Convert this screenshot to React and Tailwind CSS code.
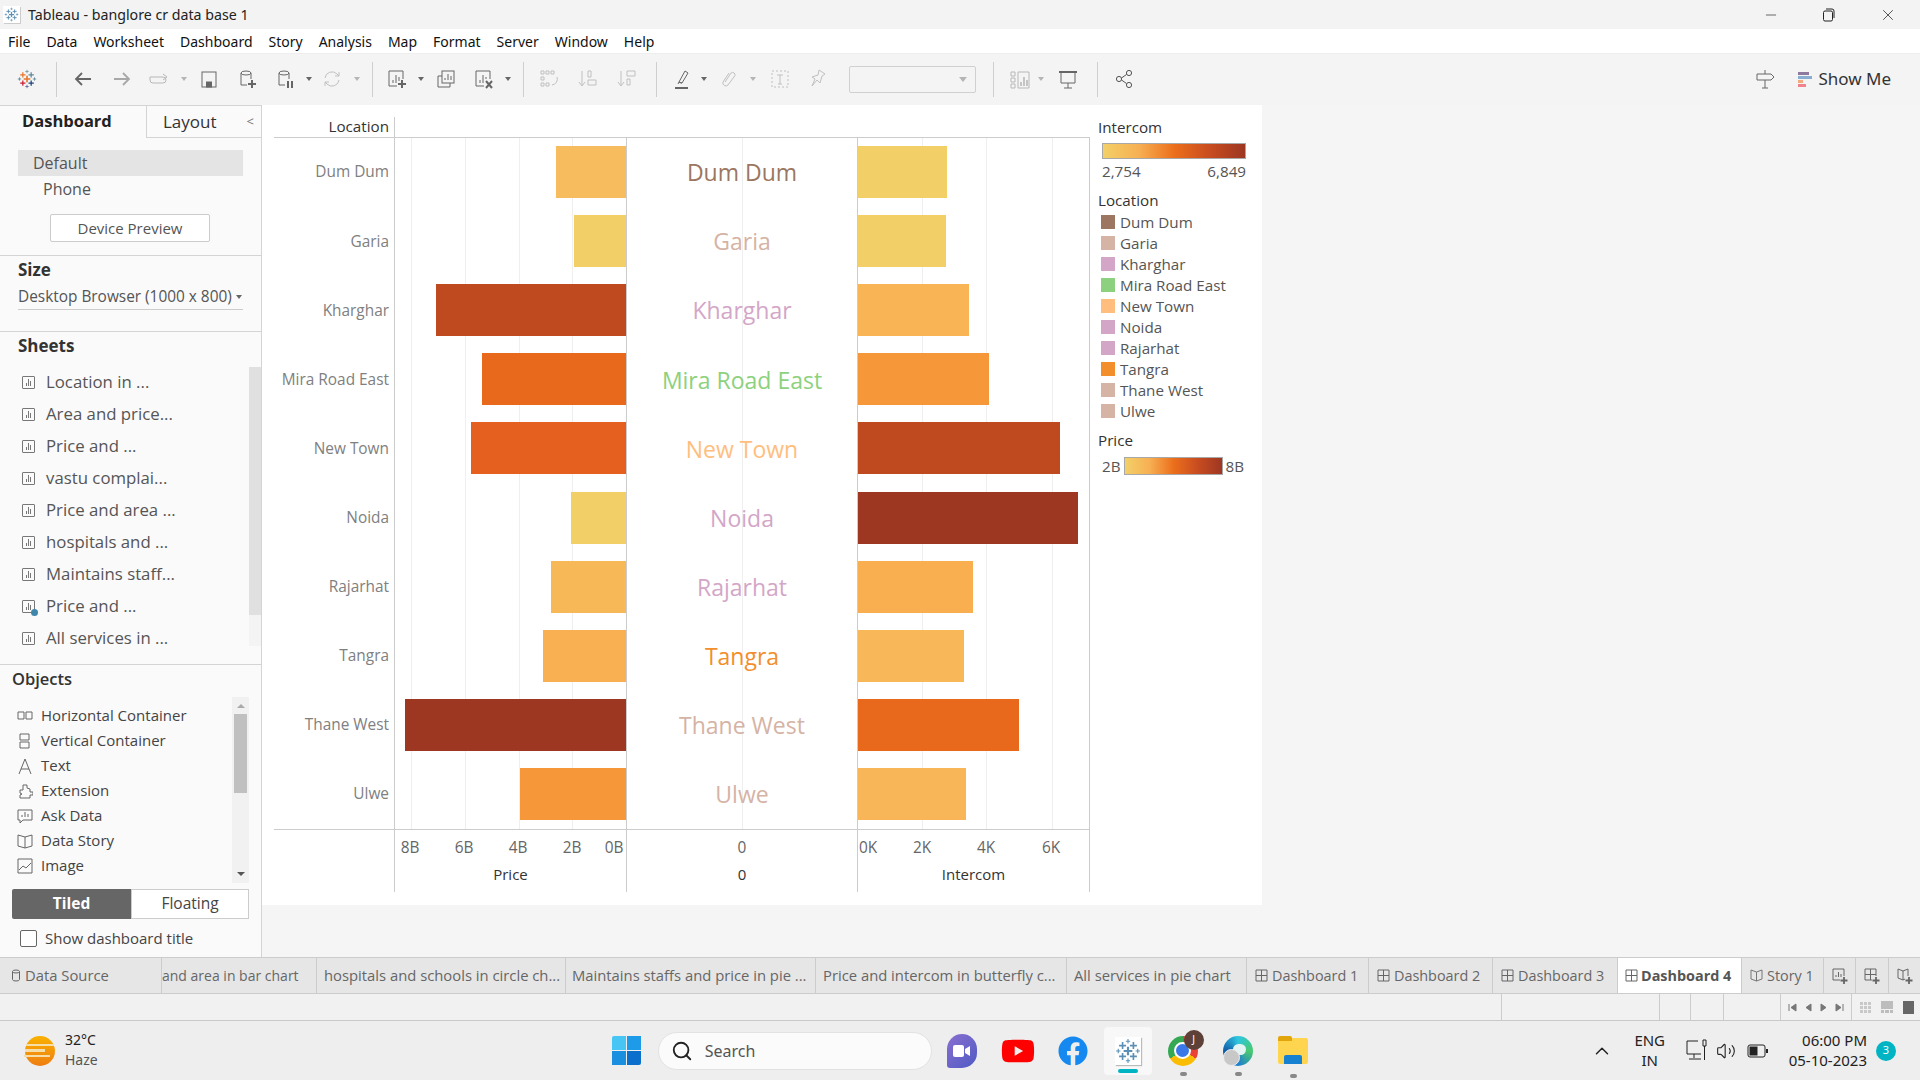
import React from "react";
import { Search, ChevronUp, Minus, X, Volume2 } from "lucide-react";
import { FaFacebook, FaYoutube } from "react-icons/fa";

const TAB_FONT = "font-['Open_Sans',sans-serif]";

const rows = [
  { name: "Dum Dum", text: "text-[#9c7660]", left: 70, lc: "bg-[#f7bc5e]", right: 89, rc: "bg-[#f3d067]" },
  { name: "Garia", text: "text-[#d5b3a5]", left: 52, lc: "bg-[#f3cf68]", right: 88, rc: "bg-[#f3cf68]" },
  { name: "Kharghar", text: "text-[#d3a6c8]", left: 190, lc: "bg-[#c04a20]", right: 111, rc: "bg-[#f9b456]" },
  { name: "Mira Road East", text: "text-[#8cd17d]", left: 144, lc: "bg-[#e8681c]", right: 131, rc: "bg-[#f69739]" },
  { name: "New Town", text: "text-[#ffbe7d]", left: 155, lc: "bg-[#e5601e]", right: 202, rc: "bg-[#c04a20]" },
  { name: "Noida", text: "text-[#d3a6c8]", left: 55, lc: "bg-[#f3d067]", right: 220, rc: "bg-[#9d3722]" },
  { name: "Rajarhat", text: "text-[#d3a6c8]", left: 75, lc: "bg-[#f7b858]", right: 115, rc: "bg-[#f9ae50]" },
  { name: "Tangra", text: "text-[#f28e2b]", left: 83, lc: "bg-[#f8b053]", right: 106, rc: "bg-[#f8b85a]" },
  { name: "Thane West", text: "text-[#d5b3a5]", left: 221, lc: "bg-[#9d3722]", right: 161, rc: "bg-[#e8681c]" },
  { name: "Ulwe", text: "text-[#d5b3a5]", left: 106, lc: "bg-[#f69739]", right: 108, rc: "bg-[#f8b658]" },
];

const legend = [
  ["Dum Dum", "bg-[#9c7660]"],
  ["Garia", "bg-[#d5b3a5]"],
  ["Kharghar", "bg-[#d3a6c8]"],
  ["Mira Road East", "bg-[#8cd17d]"],
  ["New Town", "bg-[#ffbe7d]"],
  ["Noida", "bg-[#d3a6c8]"],
  ["Rajarhat", "bg-[#d3a6c8]"],
  ["Tangra", "bg-[#f28e2b]"],
  ["Thane West", "bg-[#d5b3a5]"],
  ["Ulwe", "bg-[#d5b3a5]"],
];

const sheets = ["Location in ...", "Area and price...", "Price and ...", "vastu complai...", "Price and area ...", "hospitals and ...", "Maintains staff...", "Price and ...", "All services in ..."];

function Cross({ x, y, s, c, w = 1.2 }) {
  return <path d={`M${x - s} ${y}H${x + s}M${x} ${y - s}V${y + s}`} stroke={c} strokeWidth={w} fill="none" />;
}

function TableauLogo({ size = 20, mono = false }) {
  const c = (v) => (mono ? "#5b8fb5" : v);
  return (
    <svg width={size} height={size} viewBox="0 0 24 24" className="shrink-0">
      <Cross x={12} y={12} s={4} c={c("#e8762c")} w={2} />
      <Cross x={7} y={7} s={3.2} c={c("#e8762c")} w={1.5} />
      <Cross x={17} y={7} s={3.2} c={c("#5b879b")} w={1.5} />
      <Cross x={7} y={17} s={3.2} c={c("#c72037")} w={1.5} />
      <Cross x={17} y={17} s={3.2} c={c("#1f457e")} w={1.5} />
      <Cross x={12} y={3} s={2} c={c("#7199a6")} w={1} />
      <Cross x={12} y={21} s={2} c={c("#5b6591")} w={1} />
      <Cross x={3} y={12} s={2} c={c("#59879b")} w={1} />
      <Cross x={21} y={12} s={2} c={c("#59879b")} w={1} />
    </svg>
  );
}

function Ico({ children, className = "", w = 20, h = 20, box = "0 0 20 20" }) {
  return (
    <svg width={w} height={h} viewBox={box} fill="none" stroke="currentColor" strokeWidth="1" className={`shrink-0 ${className}`}>
      {children}
    </svg>
  );
}

const Caret = ({ className = "", light = false }) => (
  <div className={`shrink-0 w-0 h-0 border-l-[3px] border-r-[3px] border-t-[4px] border-l-transparent border-r-transparent ${light ? "border-t-[#b5b5b5]" : "border-t-[#666666]"} ${className}`} />
);

const TbDiv = ({ className = "" }) => <div className={`shrink-0 w-px h-[35px] bg-[#cfcfcf] ${className}`} />;

function Toolbar() {
  return (
    <div className="h-[51px] bg-[#f4f4f4] flex items-center shrink-0 pb-[1px]">
      <div className="ml-[17px]"><TableauLogo /></div>
      <TbDiv className="ml-[19px]" />
      <Ico className="ml-[16px] text-[#666666]"><path d="M18 10H3M9 4l-6 6 6 6" strokeWidth="1.8" /></Ico>
      <Ico className="ml-[19px] text-[#a8a8a8]"><path d="M2 10h15M11 4l6 6-6 6" strokeWidth="1.8" /></Ico>
      <Ico className="ml-[17px] text-[#b8b8b8]"><path d="M1 8h13a3 3 0 0 1 0 6H4a3 3 0 0 1-3-3V8M14 5l4 3-4 3" /></Ico>
      <Caret light className="ml-[12px]" />
      <Ico className="ml-[12px] text-[#666666]"><rect x="3" y="3" width="14" height="15" /><rect x="7.500" y="13" width="5" height="5" fill="currentColor" /></Ico>
      <Ico className="ml-[19px] text-[#666666]"><ellipse cx="8" cy="4" rx="5" ry="2" /><path d="M3 4v12h6M13 4v6" /><path d="M14 11v8M10 15h8" strokeWidth="2" /></Ico>
      <Ico className="ml-[18px] text-[#666666]"><ellipse cx="8" cy="4" rx="5" ry="2" /><path d="M3 4v12h6M13 4v6" /><path d="M12 12v7M16 12v7" strokeWidth="2" /></Ico>
      <Caret className="ml-[10px]" />
      <Ico className="ml-[10px] text-[#c0c0c0]"><path d="M3 9a7 7 0 0 1 12-4l2 2M17 11a7 7 0 0 1-12 4l-2-2" /><path d="M17 3v4h-4M3 17v-4h4" /></Ico>
      <Caret light className="ml-[12px]" />
      <TbDiv className="ml-[12px]" />
      <Ico className="ml-[14px] text-[#666666]"><path d="M10 17H2V2h14v8" /><path d="M6 14v-3M9 14V6M12 12V8" /><path d="M15 11v8M11 15h8" strokeWidth="2" /></Ico>
      <Caret className="ml-[11px]" />
      <Ico className="ml-[12px] text-[#666666]"><rect x="6" y="2" width="12" height="12" /><path d="M9 11V9M12 11V5M15 11V7" /><path d="M6 7H2v11h12v-4" /></Ico>
      <Ico className="ml-[18px] text-[#666666]"><path d="M10 17H2V2h14v8" /><path d="M6 14v-3M9 14V6M12 10V8" /><path d="M12 12l6 7M18 12l-6 7" strokeWidth="2" /></Ico>
      <Caret className="ml-[11px]" />
      <TbDiv className="ml-[12px]" />
      <Ico className="ml-[15px] text-[#c0c0c0]"><path d="M2 2h3v3H2zM7 2h3v3H7zM12 2h3v3h-3zM2 8h3v3H2zM2 14h3v3H2zM7 14h3v3H7z" /><path d="M18 8a6 6 0 0 1-5 8" /></Ico>
      <Ico className="ml-[19px] text-[#c0c0c0]"><path d="M4 2v14M1 13l3 4 3-4M10 2h3v6h-3zM10 11h8v5h-8z" /></Ico>
      <Ico className="ml-[19px] text-[#c0c0c0]"><path d="M4 2v14M1 13l3 4 3-4M10 2h8v5h-8zM10 10h3v6h-3z" /></Ico>
      <TbDiv className="ml-[19px]" />
      <Ico className="ml-[16px] text-[#666666]"><path d="M8 14l-2-1 6-11 3 2-6 10zM5 15l1-2 3 1" /><path d="M2 19h13" strokeWidth="2" /></Ico>
      <Caret className="ml-[8px]" />
      <Ico className="ml-[12px] text-[#c0c0c0]"><path d="M6 13l6-9a2.5 2.5 0 0 1 4 2.500L9 16a3 3 0 0 1-5-3l6-9" /></Ico>
      <Caret light className="ml-[11px]" />
      <Ico className="ml-[14px] text-[#c0c0c0]"><rect x="2" y="2" width="16" height="16" strokeDasharray="2 2" /><path d="M7 6h6M10 6v9M8 15h4" /></Ico>
      <Ico className="ml-[17px] text-[#c0c0c0]"><path d="M12 1l6 4-3 2-2 7-3-3-5 6 3-7-3-2 6-2z" /></Ico>
      <div className="ml-[22px] w-[127px] h-[27px] shrink-0 border border-[#d0d0d0] rounded-[2px] flex items-center justify-end pr-2">
        <Caret light className="border-l-[4px] border-r-[4px] border-t-[5px]" />
      </div>
      <TbDiv className="ml-[17px]" />
      <Ico className="ml-[16px] text-[#b8b8b8]"><path d="M8 3h11v16H8zM1 3h4v4H1zM1 9h4v4H1zM1 15h4v4H1z" /><path d="M11 17v-4M14 17V8M17 17v-6" strokeWidth="1.6" /></Ico>
      <Caret light className="ml-[8px]" />
      <Ico className="ml-[14px] text-[#666666]"><path d="M1 3h18" strokeWidth="2" /><path d="M3 3v11h14V3M10 14v5M6 19h8" /></Ico>
      <TbDiv className="ml-[19px]" />
      <Ico className="ml-[16px] text-[#555555]"><circle cx="15" cy="4" r="2.600" /><circle cx="5" cy="10" r="2.600" /><circle cx="15" cy="16" r="2.600" /><path d="M7.500 9l5-3.500M7.500 11l5 3.500" /></Ico>
      <Ico className="ml-auto text-[#666666]"><path d="M2 5h14l3 3-3 3H2zM10 1v4M10 11v8M7 19h6" /></Ico>
      <div className="ml-[23px] w-[14px] flex flex-col gap-[1px] shrink-0">
        <div className="h-[3px] w-[11px] bg-[#8e7a9e]" />
        <div className="h-[3px] w-[14px] bg-[#8aaed1]" />
        <div className="h-[3px] w-[5px] bg-[#f1aa7c]" />
        <div className="h-[3px] w-[8px] bg-[#f2828c]" />
      </div>
      <span className="ml-[6px] mr-[29px] text-[17px] text-[#333333] font-['Noto_Sans',sans-serif]">Show Me</span>
    </div>
  );
}

function SheetIcon({ check = false }) {
  return (
    <div className="relative w-[13px] h-[13px] border border-[#777777] rounded-[1px] flex items-end justify-center gap-[1px] pb-[2px] shrink-0">
      <i className="block w-px h-[3px] bg-[#777777]" />
      <i className="block w-px h-[7px] bg-[#777777]" />
      <i className="block w-px h-[5px] bg-[#777777]" />
      {check && <span className="absolute -right-[4px] -bottom-[4px] w-[7px] h-[7px] rounded-full bg-[#3f86ab]" />}
    </div>
  );
}

function ObjIcon({ kind }) {
  return (
    <Ico w={16} h={16} box="0 0 16 16" className="text-[#666666]">
      {kind === 0 && <path d="M1 4h6v7H1zM9 4h6v7H9z" />}
      {kind === 1 && <path d="M3 1h9v6H3zM3 9h9v6H3z" />}
      {kind === 2 && <path d="M2 16L8 1l6 15M4 11h8" />}
      {kind === 3 && <path d="M6 2h4v3l3 1v3h3v3h-3v3H3v-3l2-1-2-1V7h3z" />}
      {kind === 4 && <path d="M1 2h14v10H6l-3 3v-3H1zM5 9V7M8 9V4M11 9V6" />}
      {kind === 5 && <path d="M1 2l7 2 7-2v11l-7 2-7-2zM8 4v11" />}
      {kind === 6 && <path d="M1 1h14v14H1zM2 12l4-4 3 2 5-5" />}
    </Ico>
  );
}

function Sidebar() {
  const objects = ["Horizontal Container", "Vertical Container", "Text", "Extension", "Ask Data", "Data Story", "Image"];
  return (
    <div className="w-[262px] shrink-0 bg-[#fafafa] border-r border-t border-[#d4d4d4] flex flex-col font-['Open_Sans',sans-serif] text-[#555555]">
      <div className="h-[32px] flex shrink-0">
        <div className="w-[146px] pl-[22px] text-[16.500px] font-bold text-[#222222] leading-[30px]">Dashboard</div>
        <div className="flex-1 border-l border-b border-[#d4d4d4] flex items-center justify-between pl-[16px] pr-[7px] text-[17px] text-[#333333]">
          <span>Layout</span>
          <span className="text-[#777777] text-[13px]">&lt;</span>
        </div>
      </div>
      <div className="h-[118px] shrink-0 border-b border-[#d4d4d4] pt-[12px] flex flex-col">
        <div className="mx-[18px] h-[26px] bg-[#e4e4e4] pl-[15px] text-[16px] leading-[26px]">Default</div>
        <div className="pl-[43px] text-[16px] leading-[26px]">Phone</div>
        <div className="mt-[12px] ml-[50px] w-[160px] h-[28px] bg-white border border-[#cccccc] rounded-[2px] flex items-center justify-center text-[15px]">Device Preview</div>
      </div>
      <div className="h-[76px] shrink-0 border-b border-[#d4d4d4] px-[18px] pt-[2px]">
        <div className="text-[17px] font-bold text-[#333333] leading-[24px]">Size</div>
        <div className="mt-[2px] h-[26px] border-b border-[#cccccc] flex items-center justify-between text-[15.400px] whitespace-nowrap">
          <span>Desktop Browser (1000 x 800)</span>
          <Caret className="mr-[1px]" />
        </div>
      </div>
      <div className="h-[333px] shrink-0 border-b border-[#d4d4d4] flex flex-col">
        <div className="pl-[18px] pt-[2px] text-[17px] font-bold text-[#333333] leading-[24px]">Sheets</div>
        <div className="flex flex-1 mt-[8px]">
          <div className="flex-1 pl-[22px]">
            {sheets.map((s, i) => (
              <div key={i} className="h-[32px] flex items-center gap-[11px] text-[16.800px]">
                <SheetIcon check={i === 7} />
                <span>{s}</span>
              </div>
            ))}
          </div>
          <div className="w-[12px] h-[279px] mt-[1px] bg-[#f4f4f4]">
            <div className="h-[248px] bg-[#e0e0e0]" />
          </div>
        </div>
      </div>
      <div className="flex-1 flex flex-col">
        <div className="pl-[12px] pt-[2px] text-[16.500px] font-semibold text-[#333333] leading-[24px]">Objects</div>
        <div className="flex mt-[6px] pl-[17px] pr-[12px]">
          <div className="flex-1 flex flex-col pt-[6px]">
            {objects.map((o, i) => (
              <div key={o} className="h-[25px] flex items-center gap-[8px] text-[15px] text-[#444444]">
                <ObjIcon kind={i} />
                <span>{o}</span>
              </div>
            ))}
          </div>
          <div className="w-[17px] h-[186px] bg-[#f1f1f1] flex flex-col items-center">
            <div className="mt-[7px] w-0 h-0 border-l-[4px] border-r-[4px] border-b-[4px] border-l-transparent border-r-transparent border-b-[#aaaaaa]" />
            <div className="mt-[6px] w-[13px] h-[79px] bg-[#c0c0c0]" />
            <div className="mt-auto mb-[7px] w-0 h-0 border-l-[4px] border-r-[4px] border-t-[4px] border-l-transparent border-r-transparent border-t-[#555555]" />
          </div>
        </div>
        <div className="flex mt-[6px] ml-[12px] w-[237px] h-[30px] text-[15.500px]">
          <div className="w-[119px] bg-[#666666] rounded-l-[2px] text-white font-bold flex items-center justify-center">Tiled</div>
          <div className="flex-1 bg-white border border-[#cccccc] flex items-center justify-center text-[#444444]">Floating</div>
        </div>
        <div className="flex items-center gap-[8px] ml-[20px] mt-[8px] text-[15px] text-[#444444]">
          <div className="w-[17px] h-[17px] bg-white border border-[#666666] rounded-[2px]" />
          <span>Show dashboard title</span>
        </div>
      </div>
    </div>
  );
}

function Grid({ xs }) {
  return (
    <div className="absolute inset-0">
      {xs.map((x) => (
        <div key={x} className="absolute top-0 bottom-0 w-px bg-[#efefef]" style={{ left: x }} />
      ))}
    </div>
  );
}

function AxisLabels({ items }) {
  return items.map(([t, x]) => (
    <span key={t} className="absolute top-[9px] -translate-x-1/2 text-[15.400px] leading-[18px] text-[#666666]" style={{ left: x }}>
      {t}
    </span>
  ));
}

function Chart() {
  const cols = "grid grid-cols-[121px_232px_231px_232px]";
  const axisTitle = "absolute left-0 right-0 top-[35px] text-center text-[15px] leading-[18px] font-medium text-[#333333]";
  return (
    <div className="w-[816px] shrink-0 ml-[12px] mt-[12px] flex flex-col font-['Open_Sans',sans-serif]">
      <div className={`${cols} h-[21px] border-b border-[#cccccc] shrink-0`}>
        <div className="border-r border-[#cccccc] pr-[5px] text-right text-[15.200px] leading-[18px] text-[#333333]">Location</div>
      </div>
      <div className={`${cols} h-[692px] relative border-b border-[#cccccc] shrink-0`}>
        <div className="border-r border-[#cccccc] flex flex-col">
          {rows.map((r) => (
            <div key={r.name} className="flex-1 flex items-center justify-end pr-[5px] pb-[1px] text-[15.400px] text-[#808080]">{r.name}</div>
          ))}
        </div>
        <div className="relative border-r border-[#cccccc] flex flex-col">
          <Grid xs={[16, 70, 124, 177]} />
          {rows.map((r) => (
            <div key={r.name} className="relative flex-1 flex items-center justify-end pb-[1px]">
              <div className={`h-[52px] ${r.lc}`} style={{ width: r.left }} />
            </div>
          ))}
        </div>
        <div className="relative border-r border-[#cccccc] flex flex-col">
          <Grid xs={[115]} />
          {rows.map((r) => (
            <div key={r.name} className={`relative flex-1 flex items-center justify-center text-[23px] font-medium ${r.text}`}>{r.name}</div>
          ))}
        </div>
        <div className="relative border-r border-[#cccccc] flex flex-col">
          <Grid xs={[64, 128, 194]} />
          {rows.map((r) => (
            <div key={r.name} className="relative flex-1 flex items-center pb-[1px]">
              <div className={`h-[52px] ${r.rc}`} style={{ width: r.right }} />
            </div>
          ))}
        </div>
      </div>
      <div className={`${cols} h-[62px] shrink-0`}>
        <div className="border-r border-[#cccccc]" />
        <div className="relative border-r border-[#cccccc]">
          <AxisLabels items={[["8B", 15], ["6B", 69], ["4B", 123], ["2B", 177], ["0B", 219]]} />
          <span className={axisTitle}>Price</span>
        </div>
        <div className="relative border-r border-[#cccccc]">
          <AxisLabels items={[["0", 115]]} />
          <span className={axisTitle}>0</span>
        </div>
        <div className="relative border-r border-[#cccccc]">
          <AxisLabels items={[["0K", 10], ["2K", 64], ["4K", 128], ["6K", 193]]} />
          <span className={axisTitle}>Intercom</span>
        </div>
      </div>
    </div>
  );
}

function Legend() {
  const grad = "bg-[linear-gradient(90deg,#f3d067,#f7b054_25%,#ec6f1c_50%,#c84c20_75%,#9d3722)] border border-[#a8a8a8]";
  return (
    <div className="ml-[8px] pt-[13px] w-[165px] font-['Open_Sans',sans-serif] text-[#555555] text-[15.200px]">
      <div className="text-[#333333] leading-[18px]">Intercom</div>
      <div className={`ml-[4px] mt-[7px] w-[144px] h-[16px] ${grad}`} />
      <div className="ml-[4px] w-[144px] flex justify-between leading-[24px]">
        <span>2,754</span>
        <span>6,849</span>
      </div>
      <div className="mt-[8px] text-[#333333] leading-[18px]">Location</div>
      <div className="mt-[2px] ml-[3px] flex flex-col">
        {legend.map(([n, c]) => (
          <div key={n} className="h-[21px] flex items-center gap-[5px]">
            <div className={`w-[14px] h-[14px] ${c}`} />
            <span className="leading-[18px]">{n}</span>
          </div>
        ))}
      </div>
      <div className="mt-[10px] text-[#333333] leading-[18px]">Price</div>
      <div className="mt-[6px] ml-[4px] flex items-center gap-[3px]">
        <span>2B</span>
        <div className={`w-[99px] h-[18px] ${grad}`} />
        <span>8B</span>
      </div>
    </div>
  );
}

const GridIco = () => (
  <Ico w={13} h={13} box="0 0 13 13" className="text-[#666666]"><path d="M1 1h11v11H1zM6.500 1v11M1 6.500h11" strokeWidth="1" /></Ico>
);
const StoryIco = () => (
  <Ico w={13} h={13} box="0 0 13 13" className="text-[#777777]"><path d="M1 1l5.500 2L12 1v9l-5.500 2L1 10zM6.500 3v9" strokeWidth="1" /></Ico>
);

function Tabs() {
  const tab = "h-full shrink-0 border-r border-[#cccccc] flex items-center whitespace-nowrap overflow-hidden";
  return (
    <div className={`h-[37px] shrink-0 flex bg-[#e6e6e6] border-t border-b border-[#cccccc] text-[14.800px] text-[#666666] ${TAB_FONT}`}>
      <div className={`${tab} w-[162px] pl-[11px] gap-[4px]`}>
        <Ico w={10} h={13} box="0 0 10 13" className="text-[#666666]"><ellipse cx="5" cy="2.500" rx="3.500" ry="1.500" strokeWidth="1" /><path d="M1.500 2.500v8a3.500 1.500 0 0 0 7 0v-8" strokeWidth="1" /></Ico>
        <span>Data Source</span>
      </div>
      <div className={`${tab} w-[155px] text-[14px]`}>and area in bar chart</div>
      <div className={`${tab} w-[249px] pl-[7px]`}>hospitals and schools in circle ch...</div>
      <div className={`${tab} w-[250px] pl-[6px]`}>Maintains staffs and price in pie ...</div>
      <div className={`${tab} w-[251px] pl-[7px]`}>Price and intercom in butterfly c...</div>
      <div className={`${tab} w-[180px] pl-[7px]`}>All services in pie chart</div>
      <div className={`${tab} w-[122px] pl-[8px] gap-[4px] text-[14.400px]`}><GridIco /><span>Dashboard 1</span></div>
      <div className={`${tab} w-[124px] pl-[8px] gap-[4px] text-[14.400px]`}><GridIco /><span>Dashboard 2</span></div>
      <div className={`${tab} w-[125px] pl-[8px] gap-[4px] text-[14.400px]`}><GridIco /><span>Dashboard 3</span></div>
      <div className={`${tab} w-[124px] pl-[7px] gap-[3px] text-[14.400px] bg-white font-bold text-[#555555]`}><GridIco /><span>Dashboard 4</span></div>
      <div className={`${tab} w-[82px] pl-[8px] gap-[4px] text-[14.400px]`}><StoryIco /><span>Story 1</span></div>
      <div className={`${tab} w-[32px] justify-center`}>
        <Ico w={18} h={18} box="0 0 18 18" className="text-[#666666]"><path d="M9 13H2V2h11v7M5 10V8M7.500 10V5M10 10V7" strokeWidth="1" /><path d="M13 10v7M9.500 13.500h7" strokeWidth="1.800" /></Ico>
      </div>
      <div className={`${tab} w-[33px] justify-center`}>
        <Ico w={18} h={18} box="0 0 18 18" className="text-[#666666]"><path d="M9 13H2V2h11v7M7.500 2v11M2 7.500h11" strokeWidth="1" /><path d="M13 10v7M9.500 13.500h7" strokeWidth="1.800" /></Ico>
      </div>
      <div className="flex-1 flex items-center justify-center">
        <Ico w={18} h={18} box="0 0 18 18" className="text-[#666666]"><path d="M9 12l-2 1-5-2V2l5 2 5-2v7M7 4v9" strokeWidth="1" /><path d="M13 10v7M9.500 13.500h7" strokeWidth="1.800" /></Ico>
      </div>
    </div>
  );
}

function StatusBar() {
  const c = "h-full shrink-0 border-l border-[#cccccc]";
  return (
    <div className="h-[26px] shrink-0 bg-[#f1f1f1] flex pl-[1501px]">
      <div className={`${c} w-[158px]`} />
      <div className={`${c} w-[31px]`} />
      <div className={`${c} w-[33px]`} />
      <div className={`${c} w-[57px]`} />
      <div className={`${c} w-[71px] flex items-center justify-center gap-[8px] text-[#777777]`}>
        <Ico w={9} h={9} box="0 0 9 9"><path d="M1 1v7" /><path d="M8 1v7L3 4.500z" fill="currentColor" /></Ico>
        <Ico w={7} h={9} box="0 0 7 9"><path d="M6 1v7L1 4.500z" fill="currentColor" /></Ico>
        <Ico w={7} h={9} box="0 0 7 9"><path d="M1 1v7l5-3.500z" fill="currentColor" /></Ico>
        <Ico w={9} h={9} box="0 0 9 9"><path d="M8 1v7" /><path d="M1 1v7l5-3.500z" fill="currentColor" /></Ico>
      </div>
      <div className={`${c} flex-1 flex items-center gap-[10px] pl-[8px]`}>
        <div className="grid grid-cols-3 gap-[1px] w-[11px] h-[11px]">
          {[0, 1, 2, 3, 4, 5, 6, 7, 8].map((i) => (
            <i key={i} className="block bg-[#c8c8c8]" />
          ))}
        </div>
        <div className="w-[12px] h-[12px] flex flex-col gap-[1px]">
          <div className="h-[8px] bg-[#bdbdbd]" />
          <div className="h-[3px] flex gap-[1px]"><i className="block flex-1 bg-[#bdbdbd]" /><i className="block flex-1 bg-[#bdbdbd]" /><i className="block flex-1 bg-[#bdbdbd]" /></div>
        </div>
        <div className="w-[11px] h-[13px] bg-[#666666]" />
      </div>
    </div>
  );
}

function Taskbar() {
  return (
    <div className="h-[60px] shrink-0 bg-[#eeeeee] border-t border-[#c9c9c9] relative flex items-center font-['Noto_Sans',sans-serif] text-[#222222]">
      <div className="ml-[25px] w-[30px] h-[30px] rounded-full bg-[linear-gradient(#f9b100,#ee7d12)] flex flex-col justify-center gap-[3px] shrink-0">
        <div className="h-[2px] w-[28px] ml-[1px] bg-[#f6deaa]" />
        <div className="h-[3px] w-[20px] bg-[#f6deaa]" />
        <div className="h-[2px] w-[26px] -ml-[1px] bg-[#f6deaa]" />
      </div>
      <div className="ml-[10px] -mt-[2px] text-[14px] leading-[20px]">
        <div>32°C</div>
        <div className="text-[#555555]">Haze</div>
      </div>
      <div className="ml-[514px] grid grid-cols-2 gap-[1px] w-[29px] h-[29px] shrink-0">
        <div className="bg-[#47c5f4] rounded-tl-[2px]" />
        <div className="bg-[#1e9be8]" />
        <div className="bg-[#1a8fe0]" />
        <div className="bg-[#0b6fcb] rounded-br-[2px]" />
      </div>
      <div className="ml-[17px] w-[274px] h-[38px] rounded-full bg-[#fbfbfb] border border-[#e2e2e2] flex items-center pl-[12px] gap-[12px] shrink-0">
        <Search size={22} strokeWidth={2} className="text-[#222222]" />
        <span className="text-[16px] text-[#555555]">Search</span>
      </div>
      <div className="ml-[15px] w-[30px] h-[34px] rounded-[15px] rounded-bl-[3px] bg-[linear-gradient(135deg,#8b6fd0,#4e5bc4)] flex items-center justify-center shrink-0">
        <svg width="18" height="12" viewBox="0 0 18 12"><rect width="11" height="12" rx="2" fill="#fff" /><path d="M12 4l5-3v10l-5-3z" fill="#fff" /></svg>
      </div>
      <FaYoutube size={34} className="ml-[24px] text-[#ff0000] shrink-0" />
      <FaFacebook size={30} className="ml-[23px] text-[#1589f0] shrink-0" />
      <div className="relative ml-[16px] w-[48px] h-[48px] bg-[#f8f8f8] rounded-[4px] flex items-center justify-center shrink-0">
        <div className="w-[26px] h-[28px] bg-white shadow-[1px_1px_1px_#bbbbbb] flex items-center justify-center">
          <TableauLogo size={26} mono />
        </div>
        <div className="absolute bottom-[2px] left-[14px] w-[20px] h-[4px] rounded-full bg-[#00b4c4]" />
      </div>
      <div className="relative ml-[16px] w-[30px] h-[30px] rounded-full shrink-0 bg-[conic-gradient(#ea4335_0deg_120deg,#fbbc04_120deg_240deg,#34a853_240deg_360deg)] flex items-center justify-center">
        <div className="w-[13px] h-[13px] rounded-full bg-[#3b78e7] border-2 border-white box-content" />
        <div className="absolute -top-[6px] -right-[6px] w-[20px] h-[20px] rounded-full bg-[#5d4037] text-white text-[10px] flex items-center justify-center">J</div>
        <div className="absolute -bottom-[10px] left-[12px] w-[7px] h-[4px] rounded-full bg-[#888888]" />
      </div>
      <div className="relative ml-[25px] w-[30px] h-[30px] rounded-full shrink-0 bg-[conic-gradient(#2fc6e0,#49c96f_90deg,#1f7fd0_180deg,#0f5ca8_270deg,#2fc6e0)]">
        <div className="absolute top-[8px] left-[10px] w-[13px] h-[11px] rounded-full bg-[#e4f4f4]" />
        <div className="absolute bottom-0 left-0 w-[17px] h-[17px] rounded-full bg-[#c8c8c8] border border-[#eeeeee]" />
        <div className="absolute -bottom-[10px] left-[12px] w-[7px] h-[4px] rounded-full bg-[#888888]" />
      </div>
      <div className="relative ml-[25px] w-[30px] h-[26px] shrink-0 rounded-[2px] bg-[#ffd54f]">
        <div className="absolute -top-[2px] left-0 w-[14px] h-[5px] rounded-t-[2px] bg-[#e2a50c]" />
        <div className="absolute bottom-0 left-[6px] w-[18px] h-[9px] bg-[#1581d0] rounded-t-[2px]" />
        <div className="absolute -bottom-[14px] left-[12px] w-[7px] h-[4px] rounded-full bg-[#888888]" />
      </div>
      <ChevronUp size={22} strokeWidth={1.6} className="ml-[283px] shrink-0" />
      <div className="ml-[20px] -mt-[2px] w-[34px] text-[15px] leading-[20px] text-center shrink-0">
        <div>ENG</div>
        <div>IN</div>
      </div>
      <Ico w={24} h={26} box="0 0 24 26" className="ml-[18px] text-[#222222]"><path d="M16 16H2V3h11M9 16v4M4 21h12" /><path d="M18 2h3v6h-3zM19.500 8v14" /></Ico>
      <Volume2 size={20} strokeWidth={1.3} className="ml-[7px] shrink-0" />
      <Ico w={22} h={14} box="0 0 22 14" className="ml-[11px] text-[#222222]"><rect x="1" y="1" width="17" height="12" rx="2" /><rect x="3" y="3" width="7" height="8" fill="currentColor" /><path d="M20 5v4" strokeWidth="2" /></Ico>
      <div className="ml-auto -mt-[2px] text-[15px] leading-[20px] text-right shrink-0">
        <div>06:00 PM</div>
        <div>05-10-2023</div>
      </div>
      <div className="ml-[9px] mr-[24px] w-[20px] h-[20px] rounded-full bg-[#00b4c4] text-white text-[11px] flex items-center justify-center shrink-0">3</div>
    </div>
  );
}

export default function App() {
  const menu = ["File", "Data", "Worksheet", "Dashboard", "Story", "Analysis", "Map", "Format", "Server", "Window", "Help"];
  return (
    <div className="w-[1920px] h-[1080px] flex flex-col overflow-hidden bg-[#f4f4f4]">
      <div className="h-[29px] shrink-0 bg-[#f3f3f3] flex items-center pl-[3px] font-['Noto_Sans',sans-serif] text-[14.200px] text-[#222222]">
        <div className="w-[17px] h-[17px] bg-white flex items-center justify-center shadow-[1px_1px_0_#cccccc]"><TableauLogo size={15} mono /></div>
        <span className="ml-[8px]">Tableau - banglore cr data base 1</span>
        <Minus size={16} strokeWidth={1} className="ml-auto mr-[44px]" />
        <svg width="12" height="14" viewBox="0 0 12 14" fill="none" stroke="#222222" className="mr-[44px]"><rect x="0.500" y="3" width="9" height="10" rx="1.500" /><path d="M3 1h6a2 2 0 0 1 2 2v7" /></svg>
        <X size={18} strokeWidth={1} className="mr-[23px]" />
      </div>
      <div className="h-[25px] shrink-0 bg-white border-b border-[#eeeeee] flex items-center pl-[8px] gap-[16px] font-['Noto_Sans',sans-serif] text-[14px] text-[#111111]">
        {menu.map((m) => (
          <span key={m}>{m}</span>
        ))}
      </div>
      <Toolbar />
      <div className="h-[852px] shrink-0 flex">
        <Sidebar />
        <div className="flex-1 bg-[#f5f5f5]">
          <div className="w-[1000px] h-[800px] bg-white flex">
            <Chart />
            <Legend />
          </div>
        </div>
      </div>
      <Tabs />
      <StatusBar />
      <Taskbar />
    </div>
  );
}
